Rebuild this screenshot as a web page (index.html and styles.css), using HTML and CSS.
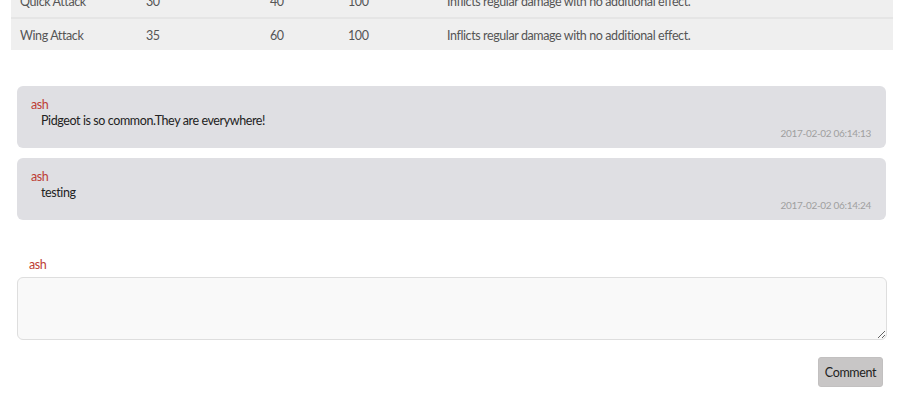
FILE: index.html
```html
<!DOCTYPE html>
<html>
<head>
<meta charset="utf-8">
<link rel="stylesheet" href="styles.css">
</head>
<body>
<div class="moves">
  <div class="row">
    <div class="c c1">Quick Attack</div>
    <div class="c c2">30</div>
    <div class="c c3">40</div>
    <div class="c c4">100</div>
    <div class="c c5">Inflicts regular damage with no additional effect.</div>
  </div>
  <div class="row">
    <div class="c c1">Wing Attack</div>
    <div class="c c2">35</div>
    <div class="c c3">60</div>
    <div class="c c4">100</div>
    <div class="c c5">Inflicts regular damage with no additional effect.</div>
  </div>
</div>

<div class="comments">
  <div class="comment">
    <div class="name">ash</div>
    <div class="msg">Pidgeot is so common.They are everywhere!</div>
    <div class="time">2017-02-02 06:14:13</div>
  </div>
  <div class="comment">
    <div class="name">ash</div>
    <div class="msg">testing</div>
    <div class="time">2017-02-02 06:14:24</div>
  </div>
</div>

<form class="form">
  <div class="who">ash</div>
  <textarea class="box"></textarea>
  <div class="actions"><button type="button" class="btn">Comment</button></div>
</form>
</body>
</html>
```

FILE: styles.css
```css
html, body {
  margin: 0;
  padding: 0;
  background: #fff;
}
body {
  font-family: Lato, "Liberation Sans", sans-serif;
  font-size: 12.5px;
  letter-spacing: -0.4px;
  color: #444;
}
.moves {
  margin: -15px 7px 0 11px;
  background: #efefef;
}
.row {
  display: flex;
  height: 31px;
  padding-top: 1px;
  align-items: center;
  color: #555;
}
.row + .row {
  border-top: 2px solid #e5e5e5;
  height: 30px;
}
.c { padding-left: 9px; box-sizing: border-box; white-space: nowrap; }
.c1 { width: 126px; }
.c2 { width: 124px; }
.c3 { width: 78px; }
.c4 { width: 99px; }
.c5 { flex: 1; }

.comments {
  margin: 36px 14px 0 17px;
  display: flex;
  flex-direction: column;
  gap: 10px;
}
.comment {
  background: #dfdfe3;
  border-radius: 6px;
  padding: 11px 15px 8px 14px;
  height: 62px;
  box-sizing: border-box;
}
.name {
  color: #bd3d35;
  line-height: 16px;
}
.msg {
  color: #222;
  padding-left: 10px;
  line-height: 16px;
}
.time {
  text-align: right;
  font-size: 10px;
  letter-spacing: -0.3px;
  line-height: 14px;
  color: #a0a0a0;
  margin-top: -3px;
}
.form {
  margin: 37px 13px 0 17px;
}
.who {
  color: #bd3d35;
  line-height: 16px;
  padding-left: 12px;
}
.box {
  display: block;
  width: 100%;
  height: 63px;
  box-sizing: border-box;
  margin-top: 4px;
  background: #f9f9f9;
  border: 1px solid #dedede;
  border-radius: 6px;
  resize: vertical;
  font-family: inherit;
}
.actions {
  display: flex;
  justify-content: flex-end;
  margin-top: 17px;
  padding-right: 4px;
}
.btn {
  width: 65px;
  height: 30px;
  background: #c8c6c6;
  border: 1px solid #c2c0c0;
  border-radius: 3px;
  font-family: inherit;
  font-size: 12.5px;
  letter-spacing: -0.35px;
  color: #222;
  padding: 0;
}
```
